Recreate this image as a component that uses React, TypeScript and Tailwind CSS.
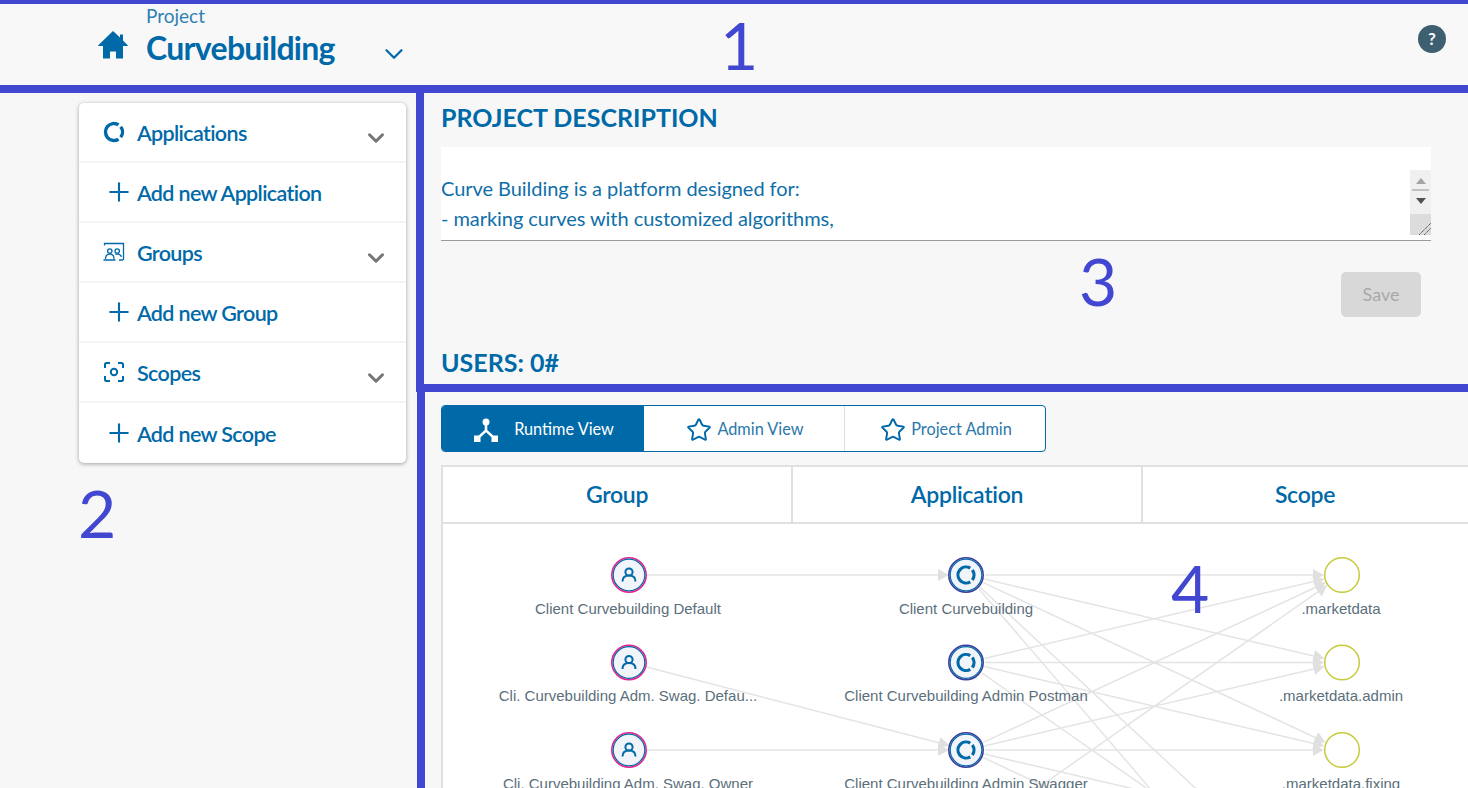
import { ChevronDown, Plus, Star } from 'lucide-react';

const BLUE = '#0069a8';
const ROWS = [575, 662.5, 750];
const groupLabels = ['Client Curvebuilding Default', 'Cli. Curvebuilding Adm. Swag. Defau...', 'Cli. Curvebuilding Adm. Swag. Owner'];
const appLabels = ['Client Curvebuilding', 'Client Curvebuilding Admin Postman', 'Client Curvebuilding Admin Swagger'];
const scopeLabels = ['.marketdata', '.marketdata.admin', '.marketdata.fixing'];

const APP_X = 967;
const SCOPE_X = 1342;
const GROUP_X = 629;

// app row -> scope rows, the lower rows run off the bottom of the page
const appLinks: [number, number][] = [
  [0, 0], [0, 1], [0, 2], [0, 4], [0, 5],
  [1, 0], [1, 1], [1, 2], [1, 4],
  [2, 0], [2, 1], [2, 2], [2, 3], [2, 4],
  [3, 0], [3, 3],
];

function rowY(i: number) {
  return 575 + 87.5 * i;
}

// ends a link at the rim of the target node with an arrow head
function Link({ x1, y1, x2, y2 }: { x1: number; y1: number; x2: number; y2: number }) {
  const a = Math.atan2(y2 - y1, x2 - x1);
  const cos = Math.cos(a);
  const sin = Math.sin(a);
  const tipX = x2 - 18 * cos;
  const tipY = y2 - 18 * sin;
  const backX = tipX - 11 * cos;
  const backY = tipY - 11 * sin;
  return (
    <g>
      <line x1={x1 + 18 * cos} y1={y1 + 18 * sin} x2={backX} y2={backY} stroke="#e4e4e4" strokeWidth="1.5" />
      <polygon points={`${tipX},${tipY} ${backX - sin * 6},${backY + cos * 6} ${backX + sin * 6},${backY - cos * 6}`} fill="#e0e0e0" />
    </g>
  );
}

function RingIcon({ cx, cy, r, width }: { cx: number; cy: number; r: number; width: number }) {
  const arc = (from: number, to: number) => {
    const p = (d: number) => [cx + r * Math.cos((d * Math.PI) / 180), cy + r * Math.sin((d * Math.PI) / 180)];
    const [x1, y1] = p(from);
    const [x2, y2] = p(to);
    return `M${x1} ${y1}A${r} ${r} 0 ${to - from > 180 ? 1 : 0} 1 ${x2} ${y2}`;
  };
  return (
    <g fill="none" stroke={BLUE} strokeWidth={width}>
      <path d={arc(58, 302)} />
      <path d={arc(-38, 38)} />
    </g>
  );
}

function Graph() {
  return (
    <svg width="1026" height="265" className="block">
      <g transform="translate(-443 -524)">
        <Link x1={GROUP_X} y1={ROWS[0]} x2={APP_X} y2={ROWS[0]} />
        <Link x1={GROUP_X} y1={ROWS[1]} x2={APP_X} y2={ROWS[2]} />
        <Link x1={GROUP_X} y1={ROWS[2]} x2={APP_X} y2={ROWS[2]} />
        {appLinks.map(([a, s]) => (
          <Link key={`${a}-${s}`} x1={APP_X} y1={rowY(a)} x2={SCOPE_X} y2={rowY(s)} />
        ))}

        {ROWS.map((y, i) => (
          <g key={y} fontFamily="'Liberation Sans', Arial, sans-serif" fontSize="15" fill="#5b6f7b" textAnchor="middle">
            <circle cx={GROUP_X} cy={y} r="17.2" fill="#f1f4f8" stroke="#e6248f" strokeWidth="1.6" />
            <circle cx={GROUP_X} cy={y} r="15.8" fill="none" stroke={BLUE} strokeWidth="1.2" />
            <g fill="none" stroke={BLUE} strokeWidth="2">
              <circle cx={GROUP_X} cy={y - 3} r="3.6" />
              <path d={`M${GROUP_X - 6.5} ${y + 6.5}c0-4.5 3-6 6.5-6s6.5 1.5 6.5 6`} />
            </g>
            <text x={GROUP_X - 1} y={y + 38.5}>{groupLabels[i]}</text>

            <circle cx={APP_X - 1} cy={y} r="17.2" fill="#f1f4f8" stroke="#3d3f9f" strokeWidth="1.6" />
            <circle cx={APP_X - 1} cy={y} r="15.8" fill="none" stroke={BLUE} strokeWidth="1.2" />
            <RingIcon cx={APP_X - 1} cy={y} r={8} width={3.2} />
            <text x={APP_X - 1} y={y + 38.5}>{appLabels[i]}</text>

            <circle cx={SCOPE_X} cy={y} r="17.3" fill="#ffffff" stroke="#c6cb3c" strokeWidth="1.5" />
            <text x={SCOPE_X - 1} y={y + 38.5}>{scopeLabels[i]}</text>
          </g>
        ))}
      </g>
    </svg>
  );
}

function AppsIcon() {
  return (
    <svg width="22" height="22" viewBox="0 0 22 22">
      <RingIcon cx={11} cy={11} r={8.5} width={3.4} />
    </svg>
  );
}

function GroupsIcon() {
  return (
    <svg width="22" height="20" viewBox="0 0 22 20" fill="none" stroke={BLUE} strokeWidth="1.3">
      <path d="M1.5 3.5V1.500h19v16.500" />
      <circle cx="6.800" cy="9" r="2.200" />
      <circle cx="14.200" cy="9" r="2.200" />
      <path d="M2.500 17c0-3.200 1.600-4.800 4.300-4.800s4.200 1.600 4.200 4.800M12.500 12.400c.6-.2 1.100-.2 1.700-.2 2 0 3.600.7 4.300 2.600M0.500 18h12M16 18h4" />
    </svg>
  );
}

function ScopesIcon() {
  return (
    <svg width="22" height="22" viewBox="0 0 22 22" fill="none" stroke={BLUE} strokeWidth="2">
      <path d="M7 2H3.500A1.500 1.500 0 0 0 2 3.500V7M15 2h3.500A1.500 1.500 0 0 1 20 3.500V7M7 20H3.500A1.500 1.500 0 0 1 2 18.500V15M15 20h3.500a1.500 1.500 0 0 0 1.500-1.500V15" />
      <circle cx="11" cy="11" r="3.200" />
    </svg>
  );
}

function RuntimeIcon() {
  return (
    <svg width="26" height="26" viewBox="0 0 26 26" fill="#ffffff" stroke="none">
      <circle cx="13" cy="5" r="3.500" />
      <path d="M11.700 7h2.600v6l7 6.500-1.800 1.800L13 15.200l-6.500 6.100-1.800-1.800 7-6.500z" />
      <rect x="1" y="18.500" width="6.500" height="6.500" />
      <rect x="18.500" y="18.500" width="6.500" height="6.500" />
    </svg>
  );
}

function SideRow({ icon, label, chevron }: { icon: React.ReactNode; label: string; chevron?: boolean }) {
  return (
    <div className={sideRow}>
      <div className="w-[58px] pl-[24px]">{icon}</div>
      <span className={sideLabel}>{label}</span>
      {chevron && <ChevronDown className="mr-[17px] mt-[12px] text-[#757575]" size={26} strokeWidth={2.8} />}
    </div>
  );
}

const plus = <Plus className="ml-[1px]" size={30} color={BLUE} strokeWidth={1.7} />;

export default function App() {
  return (
    <div className={page}>
      <header className={header}>
        <svg width="30" height="28" viewBox="0 0 30 28" className="ml-[98px] mt-[27px]" fill={BLUE}>
          <path d="M15 0 0 14.500l.5.5h4.500V27.500h7v-7h6v7h7V15h4.500l.5-.5-5-5V3.500h-3V6.500z" />
        </svg>
        <div className="ml-[18px] flex flex-col">
          <span className="text-[19px] leading-[22px] mt-[1px] text-[#2f7fb3]">Project</span>
          <span className="text-[32px] leading-[40px] mt-[1px] font-bold tracking-[-0.7px] text-[#0069a8]">Curvebuilding</span>
        </div>
        <ChevronDown className="ml-[44px] mt-[35px]" size={30} color={BLUE} strokeWidth={1.8} />
        <div className={helpDot}>?</div>
      </header>

      <div className="flex flex-1 min-h-0">
        <aside className="w-[416px] shrink-0 pt-[10px] pl-[79px]">
          <div className={sideCard}>
            <SideRow icon={<AppsIcon />} label="Applications" chevron />
            <SideRow icon={plus} label="Add new Application" />
            <SideRow icon={<GroupsIcon />} label="Groups" chevron />
            <SideRow icon={plus} label="Add new Group" />
            <SideRow icon={<ScopesIcon />} label="Scopes" chevron />
            <SideRow icon={plus} label="Add new Scope" />
          </div>
        </aside>

        <main className="flex-1 min-w-0 flex flex-col">
          <section className={descSection}>
            <h2 className={sectionTitle}>PROJECT DESCRIPTION</h2>
            <div className={textBox}>
              <div className="flex-1 pt-[26px] text-[20px] leading-[30px] tracking-[-0.05px] text-[#0f6fa9]">
                <p>Curve Building is a platform designed for:</p>
                <p>- marking curves with customized algorithms,</p>
              </div>
              <div className="w-[21px] mt-[23px] mb-[5px] flex flex-col bg-[#f0f0f0]">
                <div className="flex-1 flex flex-col items-center pt-[8px]">
                  <div className="w-0 h-0 border-x-[5px] border-x-transparent border-b-[6px] border-b-[#a3a3a3]" />
                  <div className="w-[17px] h-[2px] bg-[#c0c0c0] mt-[5px]" />
                  <div className="w-0 h-0 mt-[7px] border-x-[5px] border-x-transparent border-t-[6px] border-t-[#505050]" />
                </div>
                <div className="h-[21px] bg-[#dcdcdc] flex items-end justify-end">
                  <svg width="12" height="12" viewBox="0 0 12 12" stroke="#555" strokeWidth="1" strokeDasharray="1.500 .5">
                    <path d="M0 12 12 0M5 12l7-7" />
                  </svg>
                </div>
              </div>
            </div>
            <div className="flex justify-end mt-[31px] mr-[47px]">
              <button className={saveBtn}>Save</button>
            </div>
            <h2 className={`${sectionTitle} mt-[28px]`}>USERS: 0#</h2>
          </section>

          <section className={graphSection}>
            <div className={tabs}>
              <div className="w-[202px] pt-[2px] bg-[#0069a8] text-white flex items-center justify-center gap-[15px] pl-[1px]">
                <RuntimeIcon />
                <span>Runtime View</span>
              </div>
              <div className="w-[201px] pt-[2px] pl-[2px] flex items-center justify-center gap-[5px] border-r border-[#dedede] text-[#2a77ab]">
                <Star size={26} color={BLUE} strokeWidth={1.8} />
                <span>Admin View</span>
              </div>
              <div className="flex-1 pt-[2px] pl-[2px] flex items-center justify-center gap-[5px] text-[#2a77ab]">
                <Star size={26} color={BLUE} strokeWidth={1.8} />
                <span>Project Admin</span>
              </div>
            </div>

            <div className="flex-1 min-h-0 mt-[13px] flex flex-col border-l-2 border-[#e0e0e0] bg-white">
              <div className={tableHead}>
                <div className={headCell}>Group</div>
                <div className={headCell}>Application</div>
                <div className="flex-1 flex items-center justify-center -ml-[1px]">Scope</div>
              </div>
              <Graph />
            </div>
          </section>
        </main>
      </div>

      <span className={`${marker} left-[720px] top-[2px]`}>1</span>
      <span className={`${marker} left-[78px] top-[470px]`}>2</span>
      <span className={`${marker} left-[1079px] top-[238px]`}>3</span>
      <span className={`${marker} left-[1171px] top-[545px]`}>4</span>
    </div>
  );
}

const page = `
  relative w-full h-screen overflow-hidden flex flex-col bg-[#f7f7f7]
  font-['Lato','Liberation_Sans',sans-serif]`;
const header = `
  h-[93px] shrink-0 flex items-start bg-[#f8f8f8]
  border-t-4 border-b-8 border-[#4147d0]`;
const helpDot = `
  ml-auto mr-[22px] mt-[21px] w-[28px] h-[28px] rounded-full bg-[#3d5f70]
  flex items-center justify-center text-white text-[17px] font-bold`;
const sideCard = `
  w-[327px] bg-white rounded-[5px] overflow-hidden
  shadow-[0_1px_4px_rgba(0,0,0,0.35)]`;
const sideRow = `
  h-[60px] flex items-center
  border-b-2 border-[#f5f5f5] last:border-b-0`;
const sideLabel = `
  flex-1 mt-[3px] text-[21.5px] font-semibold tracking-[-0.65px] text-[#0069a8]`;
const descSection = `
  h-[299px] shrink-0 border-l-8 border-b-8 border-[#4147d0]
  pl-[17px] pt-[7px]`;
const sectionTitle = `text-[25px] leading-[34px] font-bold text-[#0069a8]`;
const textBox = `
  flex w-[990px] h-[94px] mt-[13px] bg-white
  border-b-[1.5px] border-[#9a9a9a]`;
const saveBtn = `
  w-[80px] h-[45px] rounded-[5px] bg-[#d8d8d8]
  text-[18px] text-[#a8a8a8]`;
const graphSection = `
  flex-1 min-h-0 ml-[1px] border-l-8 border-[#4147d0]
  pl-[16px] pt-[13px] flex flex-col`;
const tabs = `
  w-[605px] h-[47px] shrink-0 flex rounded-[4px] overflow-hidden
  border border-[#0069a8] bg-white text-[16.3px]`;
const tableHead = `
  flex h-[59px] shrink-0 border-y-2 border-[#e0e0e0]
  text-[23px] font-semibold tracking-[-0.3px] text-[#0069a8]`;
const headCell = `
  w-[350px] flex items-center justify-center border-r-2 border-[#e0e0e0]`;
const marker = `
  absolute text-[66px] leading-[86px] text-[#4147d0]`;
